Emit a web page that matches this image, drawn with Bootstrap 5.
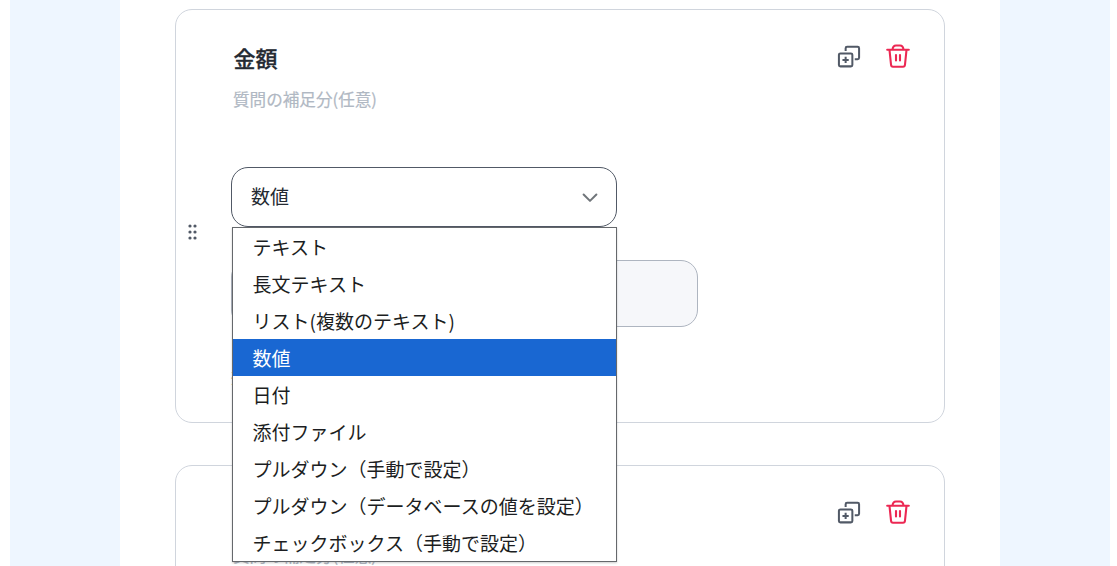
<!DOCTYPE html>
<html lang="ja">
<head>
  <meta charset="UTF-8">
  <title>質問の設定</title>
  <link href="https://cdn.jsdelivr.net/npm/bootstrap@5.3.2/dist/css/bootstrap.min.css" rel="stylesheet">
  <style>
    body { font-family: "Noto Sans CJK JP", sans-serif; color: #242a32; height: 566px; }
    .page-bg { width: 1100px; margin-left: 10px; background: #eef6ff; }
    .sheet { width: 880px; padding-top: 9px; }
    .question { width: 770px; height: 414px; border: 1px solid #d0d5dd; border-radius: 17px; padding: 0 34.5px 0 12px; }
    .question + .question { margin-top: 42px; }
    .handle { width: 10px; margin-top: 32px; color: #515966; }
    .question-body { width: 466px; margin-left: 33px; padding-top: 30px; }
    .q-title { font-size: 22px; line-height: 34px; font-weight: 500; padding-left: 2.5px; -webkit-text-stroke: .3px currentColor; }
    .q-note { font-size: 16.6px; line-height: 24px; margin-top: 13px; padding-left: 2px; color: #b0b8c3; -webkit-text-stroke: .2px currentColor; }
    .type-field { width: 386px; margin-top: 56px; }
    .type-select { height: 60px; border: 1px solid #515966; border-radius: 17px; padding: 0 18px 1px 19px; font-size: 19px; }
    .type-menu { position: absolute; top: 60px; left: 1px; width: 385px; height: 335px; z-index: 10; border: 1px solid #65686c; background: #fff; box-shadow: 0 1px 2px rgba(0, 0, 0, .2); }
    .type-menu li { height: 37px; line-height: 38px; padding-left: 19.6px; font-size: 19px; color: #1c1e22; }
    .type-menu li.selected { background: #1967d2; color: #fff; }
    .answer { width: 467px; height: 67px; margin-top: 33px; border: 1px solid #aeb5c0; border-radius: 17px; background: #f6f7fa; }
    .q-required { margin-top: 39px; margin-left: -1.5px; font-size: 16.5px; }
    .actions { padding-top: 34px; gap: 25px; }
    .chevron { margin-top: 2px; }
  </style>
</head>
<body class="overflow-hidden">
  <div class="page-bg h-100">
    <main class="sheet bg-white mx-auto h-100 overflow-hidden d-flex flex-column align-items-center">

      <section class="question flex-shrink-0 d-flex">
        <div class="handle align-self-center d-flex">
          <svg width="10" height="18" viewBox="0 0 10 18" fill="currentColor"><circle cx="2" cy="3" r="1.6"/><circle cx="7" cy="3" r="1.6"/><circle cx="2" cy="9" r="1.6"/><circle cx="7" cy="9" r="1.6"/><circle cx="2" cy="15" r="1.6"/><circle cx="7" cy="15" r="1.6"/></svg>
        </div>
        <div class="question-body">
          <div class="q-title">金額</div>
          <div class="q-note">質問の補足分(任意)</div>
          <div class="type-field position-relative">
            <div class="type-select bg-white d-flex align-items-center justify-content-between">
              <span>数値</span>
              <svg class="chevron" width="16" height="10" viewBox="0 0 16 10" fill="none" stroke="#70757a" stroke-width="2" stroke-linecap="round" stroke-linejoin="round"><path d="M1.600 1.500 8 7.900l6.400-6.400"/></svg>
            </div>
            <ul class="type-menu list-unstyled mb-0">
              <li>テキスト</li>
              <li>長文テキスト</li>
              <li>リスト(複数のテキスト)</li>
              <li class="selected">数値</li>
              <li>日付</li>
              <li>添付ファイル</li>
              <li>プルダウン（手動で設定）</li>
              <li>プルダウン（データベースの値を設定）</li>
              <li>チェックボックス（手動で設定）</li>
            </ul>
          </div>
          <div class="answer"></div>
          <div class="q-required">※</div>
        </div>
        <div class="actions ms-auto d-flex align-items-start">
          <svg width="24" height="24" viewBox="-.5 -.8 25 25" fill="none" stroke="#515966" stroke-width="2.1" stroke-linejoin="round"><path d="M8.500 6.500V3.500q0-1.500 1.500-1.500h11q1.500 0 1.500 1.500v10q0 1.500-1.500 1.500H18"/><rect x="1.500" y="9" width="14" height="13.500" rx="1.500"/><path d="M8.500 12.500v6.500M5.200 15.800h6.500"/></svg>
          <svg width="24" height="24" viewBox="0 0 24 24" fill="none" stroke="#ec2853" stroke-width="2.1" stroke-linecap="round" stroke-linejoin="round"><path d="M1.200 5.700h21.600M6.500 5.500q.5-4 3.500-4h4q3 0 3.500 4M3.500 6l1.500 14.500q.2 2.300 2 2.300h10q1.800 0 2-2.300L20.500 6"/><path d="M10 11v5.500M14 11v5.500"/></svg>
        </div>
      </section>

      <section class="question flex-shrink-0 d-flex">
        <div class="handle align-self-center"></div>
        <div class="question-body">
          <div class="q-title">項目</div>
          <div class="q-note">質問の補足分(任意)</div>
        </div>
        <div class="actions ms-auto d-flex align-items-start">
          <svg width="24" height="24" viewBox="-.5 -.8 25 25" fill="none" stroke="#515966" stroke-width="2.1" stroke-linejoin="round"><path d="M8.500 6.500V3.500q0-1.500 1.500-1.500h11q1.500 0 1.500 1.500v10q0 1.500-1.500 1.500H18"/><rect x="1.500" y="9" width="14" height="13.500" rx="1.500"/><path d="M8.500 12.500v6.500M5.200 15.800h6.500"/></svg>
          <svg width="24" height="24" viewBox="0 0 24 24" fill="none" stroke="#ec2853" stroke-width="2.1" stroke-linecap="round" stroke-linejoin="round"><path d="M1.200 5.700h21.600M6.500 5.500q.5-4 3.500-4h4q3 0 3.500 4M3.500 6l1.500 14.500q.2 2.300 2 2.300h10q1.800 0 2-2.300L20.500 6"/><path d="M10 11v5.500M14 11v5.500"/></svg>
        </div>
      </section>

    </main>
  </div>
  <script src="https://cdn.jsdelivr.net/npm/bootstrap@5.3.2/dist/js/bootstrap.bundle.min.js"></script>
</body>
</html>
